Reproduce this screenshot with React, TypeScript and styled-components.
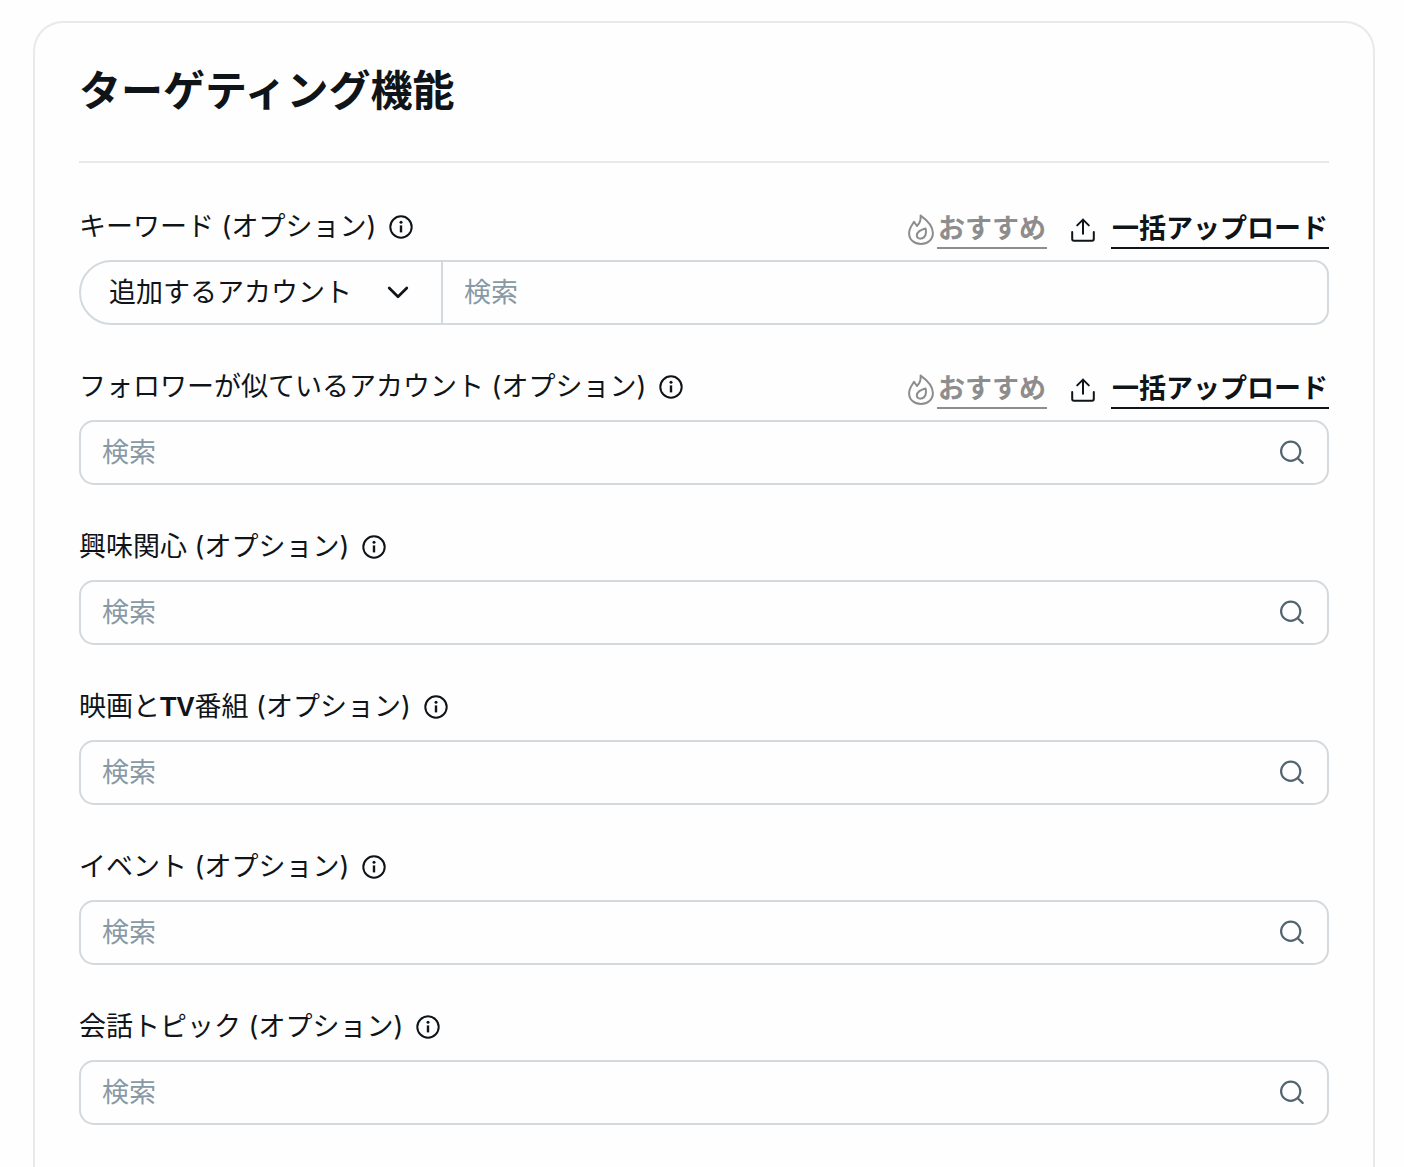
import { useId } from 'react';
import styled, { createGlobalStyle } from 'styled-components';

const GlobalStyle = createGlobalStyle`
  *, *::before, *::after { box-sizing: border-box; }
  body {
    margin: 0;
    background: #fefefe;
    color: #0f1419;
    font-family: Inter, "Noto Sans CJK JP", sans-serif;
    font-size: 27px;
  }
  button, input, select { font: inherit; color: inherit; }
`;

const Page = styled.main`
  padding: 21px 29px 0 33px;
`;

const Card = styled.section`
  min-height: calc(100vh - 21px);
  padding: 0 44px;
  border: 2px solid #e7eaeb;
  border-bottom: 0;
  border-radius: 30px 30px 0 0;
`;

const Title = styled.h1`
  margin: 0;
  padding: 40px 0 42px;
  border-bottom: 2px solid #e7eaeb;
  font-size: 42px;
  font-weight: 700;
  line-height: 56px;
`;

const Fields = styled.form`
  display: flex;
  flex-direction: column;
  gap: 41px;
  padding-top: 43px;
`;

const FieldBlock = styled.div`
  display: flex;
  flex-direction: column;
  gap: 11px;
`;

const FieldHead = styled.div`
  display: flex;
  justify-content: space-between;
  height: 43px;
`;

const LabelGroup = styled.div`
  display: flex;
  align-items: center;
  gap: 13px;
  height: 42px;
`;

const Label = styled.label`
  line-height: 42px;
`;

const Latin = styled.span`
  font-family: "Liberation Sans", Arial, sans-serif;
  font-weight: 700;
`;

const IconButton = styled.button`
  display: flex;
  padding: 0;
  border: 0;
  background: none;
  cursor: pointer;
`;

const Actions = styled.div`
  display: flex;
  align-items: flex-end;
  gap: 24px;
`;

const Action = styled.button<{ $muted?: boolean }>`
  display: flex;
  align-items: center;
  gap: ${(p) => (p.$muted ? 3 : 16)}px;
  padding: 0;
  border: 0;
  background: none;
  color: ${(p) => (p.$muted ? '#8d8d8d' : '#0f1419')};
  font-weight: 700;
  cursor: pointer;
`;

const ActionText = styled.span`
  padding: 0 1px;
  border-bottom: 2px solid currentColor;
  line-height: 36px;
`;

const Box = styled.div<{ $pill?: boolean }>`
  display: flex;
  align-items: center;
  height: 65px;
  border: 2px solid #d3d9dd;
  border-radius: ${(p) => (p.$pill ? '33px 15px 15px 33px' : '15px')};
  overflow: hidden;
`;

const SearchInput = styled.input`
  flex: 1;
  min-width: 0;
  height: 100%;
  padding: 0 21px;
  border: 0;
  outline: 0;
  background: none;
  &::placeholder { color: #8899a6; opacity: 1; }
`;

const SearchButton = styled(IconButton)`
  padding: 0 23px;
`;

const SelectWrap = styled.div`
  display: grid;
  align-items: center;
  height: 100%;
  border-right: 2px solid #d3d9dd;
  & > * { grid-area: 1 / 1; }
  & > svg { justify-self: end; margin-right: 32px; pointer-events: none; }
`;

const Select = styled.select`
  width: 360px;
  height: 100%;
  padding: 0 60px 0 28px;
  border: 0;
  outline: 0;
  background: none;
  appearance: none;
`;

const InfoIcon = () => (
  <svg width="24" height="24" viewBox="0 0 24 24" fill="none" stroke="#0f1419" strokeWidth="2">
    <circle cx="12" cy="12" r="10.7" />
    <path d="M12 10.4v7" strokeWidth="2.4" />
    <circle cx="12" cy="7.2" r="1.5" fill="#0f1419" stroke="none" />
  </svg>
);

const FlameIcon = () => (
  <svg width="26" height="32" viewBox="0 0 26 32" fill="none" stroke="currentColor" strokeWidth="2" strokeLinejoin="round" strokeLinecap="round">
    <path d="M12.6 1.6C18 5.4 24.9 11.4 24.9 19C24.9 25.8 19.6 30 13 30C6.4 30 1.1 25.8 1.1 19.2C1.1 14.2 4 11.2 6 7.8L9 12C11.8 9.4 12.9 5.6 12.6 1.6Z" />
    <path d="M17.6 14.4C12.6 15.4 8.8 18.4 8.8 21.4C8.8 23.8 10.8 24.8 12.8 24.6C17.2 24.2 19 19.4 17.6 14.4Z" />
  </svg>
);

const UploadIcon = () => (
  <svg width="24" height="24" viewBox="0 0 24 24" fill="none" stroke="currentColor" strokeWidth="2" strokeLinecap="round" strokeLinejoin="round">
    <path d="M1.2 14v7a1.8 1.8 0 0 0 1.8 1.8h18a1.8 1.8 0 0 0 1.8-1.8V14" />
    <path d="M12 15.8V1.6M6.2 7.4L12 1.6l5.8 5.8" />
  </svg>
);

const ChevronIcon = () => (
  <svg width="22" height="16" viewBox="0 0 22 16" fill="none" stroke="#0f1419" strokeWidth="2.7" strokeLinecap="round" strokeLinejoin="round">
    <path d="M2.2 3l8.8 8.8L19.8 3" />
  </svg>
);

const SearchIcon = () => (
  <svg width="24" height="26" viewBox="0 0 24 26" fill="none" stroke="#536471" strokeWidth="2.2" strokeLinecap="round">
    <circle cx="10.7" cy="11.2" r="9.6" />
    <path d="M17.8 18.3l4.8 4.6" />
  </svg>
);

type FieldProps = {
  label: React.ReactNode;
  actions?: boolean;
  accounts?: boolean;
};

function Field({ label, actions, accounts }: FieldProps) {
  const id = useId();
  return (
    <FieldBlock>
      <FieldHead>
        <LabelGroup>
          <Label htmlFor={id}>{label} (オプション)</Label>
          <IconButton type="button" aria-label="詳細">
            <InfoIcon />
          </IconButton>
        </LabelGroup>
        {actions && (
          <Actions>
            <Action type="button" $muted>
              <FlameIcon />
              <ActionText>おすすめ</ActionText>
            </Action>
            <Action type="button">
              <UploadIcon />
              <ActionText>一括アップロード</ActionText>
            </Action>
          </Actions>
        )}
      </FieldHead>
      <Box $pill={accounts}>
        {accounts && (
          <SelectWrap>
            <Select aria-label="アカウントの種類">
              <option>追加するアカウント</option>
            </Select>
            <ChevronIcon />
          </SelectWrap>
        )}
        <SearchInput id={id} type="text" placeholder="検索" />
        {!accounts && (
          <SearchButton type="button" aria-label="検索">
            <SearchIcon />
          </SearchButton>
        )}
      </Box>
    </FieldBlock>
  );
}

export default function App() {
  return (
    <>
      <GlobalStyle />
      <Page>
        <Card>
          <Title>ターゲティング機能</Title>
          <Fields>
            <Field label="キーワード" actions accounts />
            <Field label="フォロワーが似ているアカウント" actions />
            <Field label="興味関心" />
            <Field label={<>映画と<Latin>TV</Latin>番組</>} />
            <Field label="イベント" />
            <Field label="会話トピック" />
          </Fields>
        </Card>
      </Page>
    </>
  );
}
